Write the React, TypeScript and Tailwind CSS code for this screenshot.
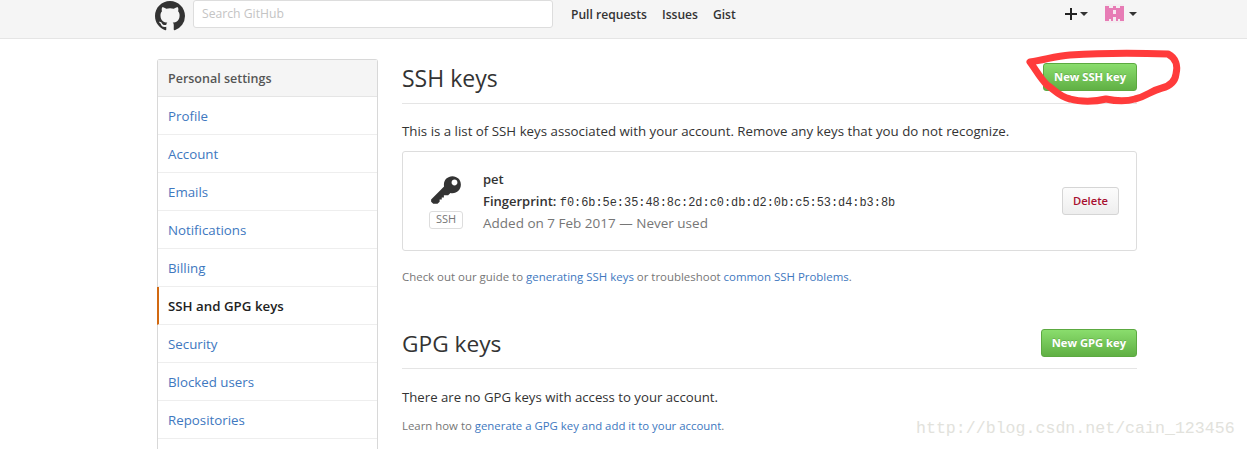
const FONT = "font-['Open_Sans',sans-serif]"

const NAV = ['Profile', 'Account', 'Emails', 'Notifications', 'Billing', 'SSH and GPG keys', 'Security', 'Blocked users', 'Repositories']

function Mark() {
  return (
    <svg viewBox="0 0 16 16" className="w-[30px] h-[30px] fill-[#333] shrink-0">
      <path d="M8 0C3.58 0 0 3.58 0 8c0 3.54 2.29 6.53 5.47 7.59.4.07.55-.17.55-.38 0-.19-.01-.82-.01-1.49-2.01.37-2.53-.49-2.69-.94-.09-.23-.48-.94-.82-1.13-.28-.15-.68-.52-.01-.53.63-.01 1.08.58 1.23.82.72 1.21 1.87.87 2.33.66.07-.52.28-.87.51-1.07-1.78-.2-3.64-.89-3.64-3.95 0-.87.31-1.59.82-2.15-.08-.2-.36-1.02.08-2.12 0 0 .67-.21 2.2.82.64-.18 1.32-.27 2-.27.68 0 1.36.09 2 .27 1.53-1.04 2.2-.82 2.2-.82.44 1.1.16 1.92.08 2.12.51.56.82 1.27.82 2.15 0 3.07-1.87 3.75-3.65 3.95.29.25.54.73.54 1.48 0 1.07-.01 1.93-.01 2.2 0 .21.15.46.55.38A8.013 8.013 0 0016 8c0-4.42-3.58-8-8-8z" />
    </svg>
  )
}

function Caret() {
  return <span className="block w-0 h-0 border-x-[4px] border-x-transparent border-t-[4px] border-t-[#333]" />
}

function Plus() {
  return (
    <svg viewBox="0 0 12 12" className="w-[12px] h-[12px] fill-[#222]" shapeRendering="crispEdges">
      <path d="M5 0h2v5h5v2H7v5H5V7H0V5h5z" />
    </svg>
  )
}

function Avatar() {
  return (
    <svg viewBox="0 0 10 10" className="w-[19px] h-[19px] bg-[#f4eef1]" shapeRendering="crispEdges">
      <path className="fill-[#e77cb5]" d="M0 1h2v1h2V1h2v1h2V1h2v8H8V8H7v1H6V7H4v2H3V8H2v1H0z" />
      <path className="fill-[#f8e6f0]" d="M4 3h2v2H4z" />
    </svg>
  )
}

function Header() {
  return (
    <header className="h-[39px] bg-[#f5f5f5] border-b border-[#e5e5e5] flex items-center overflow-hidden">
      <div className="w-[155px] shrink-0" />
      <div className="-mt-[6px]">
        <Mark />
      </div>
      <div className="ml-[8px] -mt-[10px] w-[360px] h-[28px] bg-white border border-[#ddd] rounded-[3px] flex items-center pl-[8px] pt-[1px] text-[12.2px] text-[#c4c4c4]">
        Search GitHub
      </div>
      <nav className="ml-[18px] -mt-[8px] flex gap-[15px] text-[12.1px] font-semibold text-[#333]">
        <span>Pull requests</span>
        <span>Issues</span>
        <span>Gist</span>
      </nav>
      <div className="ml-auto mr-[110px] -mt-[11px] flex items-center">
        <Plus />
        <span className="ml-[3px]"><Caret /></span>
        <span className="ml-[17px]"><Avatar /></span>
        <span className="ml-[5px]"><Caret /></span>
      </div>
    </header>
  )
}

function Sidebar() {
  return (
    <aside className="w-[221px] shrink-0 border border-[#d8d8d8] border-b-0 rounded-t-[3px]">
      <div className="h-[37px] bg-[#f5f5f5] border-b border-[#e5e5e5] flex items-center pt-[2px] px-[10px] text-[12.5px] font-semibold text-[#555]">
        Personal settings
      </div>
      {NAV.map((item) => {
        const active = item === 'SSH and GPG keys'
        return (
          <div
            key={item}
            className={
              active
                ? 'h-[38px] border-b border-[#eee] border-l-2 border-l-[#d26911] -ml-px pl-[9px] pt-[2px] flex items-center text-[13.3px] font-semibold text-[#222]'
                : 'h-[38px] border-b border-[#eee] flex items-center px-[10px] pt-[2px] text-[13.3px] text-[#4078c0]'
            }
          >
            {item}
          </div>
        )
      })}
      <div className="h-[38px]" />
    </aside>
  )
}

function GreenButton({ children }: { children: string }) {
  return (
    <button className="h-[28px] px-[10px] rounded-[3px] border border-[#5ca941] bg-gradient-to-b from-[#8add6d] to-[#60b044] text-[11.2px] font-bold text-white [text-shadow:0_-1px_0_rgba(0,0,0,0.15)]">
      {children}
    </button>
  )
}

function SshCard() {
  return (
    <div className="mt-[10px] h-[100px] border border-[#ddd] rounded-[3px] flex items-center">
      <div className="w-[80px] pl-[6px] shrink-0 flex flex-col items-center">
        <svg viewBox="0 0 14 16" className="w-[30px] h-[34px] fill-[#333]">
          <path d="M12.83 2.17C12.08 1.42 11.14 1.03 10 1c-1.13.03-2.08.42-2.83 1.17S6.04 3.86 6.01 5c0 .3.03.59.09.89L0 12v1l1 1h2l1-1v-1h1v-1h1v-1h2l1.09-1.11c.3.08.59.11.91.11 1.14-.03 2.08-.42 2.83-1.17S13.97 6.14 14 5c-.03-1.14-.42-2.08-1.17-2.83zM11 5.38c-.77 0-1.38-.61-1.38-1.38 0-.77.61-1.38 1.38-1.38.77 0 1.38.61 1.38 1.38 0 .77-.61 1.38-1.38 1.38z" />
        </svg>
        <span className="mt-[3px] h-[18px] w-[34px] border border-[#ddd] rounded-[3px] flex items-center justify-center text-[11px] text-[#767676]">SSH</span>
      </div>
      <div className="flex-1 text-[13px] text-[#333]">
        <div className="h-[22px] leading-[22px] font-semibold">pet</div>
        <div className="h-[22px] leading-[22px] flex items-baseline">
          <span className="font-semibold whitespace-pre">Fingerprint: </span>
          <span className="font-['Liberation_Mono',monospace] text-[11.9px]">f0:6b:5e:35:48:8c:2d:c0:db:d2:0b:c5:53:d4:b3:8b</span>
        </div>
        <div className="h-[22px] leading-[22px] text-[13.5px] text-[#767676]">Added on 7 Feb 2017 — Never used</div>
      </div>
      <button className="mr-[17px] w-[57px] h-[28px] rounded-[3px] border border-[#d5d5d5] bg-gradient-to-b from-[#fcfcfc] to-[#eee] text-[11.2px] font-semibold text-[#a8102f]">
        Delete
      </button>
    </div>
  )
}

function Main() {
  return (
    <main className="ml-[24px] w-[735px] shrink-0 text-[13.3px] text-[#333]">
      <div className="h-[45px] border-b border-[#e5e5e5] flex items-start justify-between">
        <h2 className="text-[23px] leading-[38px] text-[#333]">SSH keys</h2>
        <div className="mt-[4px]">
          <GreenButton>New SSH key</GreenButton>
        </div>
      </div>
      <p className="mt-[17px] leading-[20px]">This is a list of SSH keys associated with your account. Remove any keys that you do not recognize.</p>
      <SshCard />
      <p className="mt-[17px] text-[11.45px] leading-[18px] text-[#767676]">
        Check out our guide to <span className="text-[#4078c0]">generating SSH keys</span> or troubleshoot <span className="text-[#4078c0]">common SSH Problems</span>.
      </p>
      <div className="mt-[38px] h-[45px] border-b border-[#e5e5e5] flex items-start justify-between">
        <h2 className="text-[22.7px] leading-[40px] text-[#333]">GPG keys</h2>
        <div className="mt-[5px]">
          <GreenButton>New GPG key</GreenButton>
        </div>
      </div>
      <p className="mt-[18px] leading-[20px] text-[13.2px]">There are no GPG keys with access to your account.</p>
      <p className="mt-[10px] text-[11.4px] leading-[18px] text-[#767676]">
        Learn how to <span className="text-[#4078c0]">generate a GPG key and add it to your account</span>.
      </p>
    </main>
  )
}

export default function App() {
  return (
    <div className={`relative w-[1247px] h-[449px] overflow-hidden bg-white ${FONT}`}>
      <Header />
      <div className="flex pl-[157px] pt-[20px]">
        <Sidebar />
        <Main />
      </div>
      {/* red marker scribble round the button */}
      <svg viewBox="0 0 1247 449" className="absolute inset-0 w-[1247px] h-[449px] pointer-events-none">
        <path
          d="M1030 62C1045 60 1055 56 1070 55C1100 53 1140 53 1168 54C1176 58 1178 66 1176 74C1175 82 1170 86 1162 88C1150 91 1148 96 1135 99C1125 102 1115 101 1106 99C1095 102 1080 102 1070 99C1058 96 1055 90 1047 85C1040 78 1036 70 1030 62Z"
          className="fill-none stroke-[#ff3b3b]"
          strokeWidth={7}
          strokeLinejoin="round"
        />
      </svg>
      <div className="absolute left-[916px] top-[419px] font-['Liberation_Mono',monospace] text-[16.6px] leading-[20px] text-[#e2e2dc]">
        http://blog.csdn.net/cain_123456
      </div>
    </div>
  )
}
